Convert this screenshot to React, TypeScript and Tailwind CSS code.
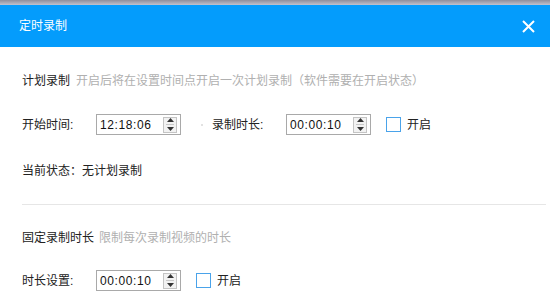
import React from 'react';

const font = { fontFamily: '"Liberation Sans", "Noto Sans CJK SC", sans-serif' };

function TimeBox({ value }: { value: string }) {
  return (
    <div className="flex h-[21px] w-[85px] items-center justify-between border border-[#a9a9a9] bg-white pl-[3px] pr-[3px]">
      <span className="text-[12px] tracking-[0.6px] text-[#111]">{value}</span>
      {/* 上下微调按钮 */}
      <div className="flex h-[16px] w-[14px] flex-col items-center justify-center gap-[2px] border border-[#c4c4c4] bg-[#f2f2f2]">
        <svg width="7" height="4" viewBox="0 0 7 4">
          <path d="M3.5 0 L7 4 L0 4 Z" fill="#333" />
        </svg>
        <div className="h-px w-[8px] bg-[#c8c8c8]" />
        <svg width="7" height="4" viewBox="0 0 7 4">
          <path d="M0 0 L7 0 L3.5 4 Z" fill="#333" />
        </svg>
      </div>
    </div>
  );
}

function CheckOpen() {
  return (
    <div className="flex items-center gap-[6px]">
      <div className="h-[15px] w-[15px] border border-[#4aa3ea] bg-white" />
      <span className="text-[12px] text-[#222]">开启</span>
    </div>
  );
}

export default function App() {
  return (
    <div className="h-[305px] w-[550px] overflow-hidden bg-white" style={font}>
      <div className="h-[5px] bg-gradient-to-b from-[#8e8e9c] to-[#c2c2ce]" />
      {/* 标题栏 */}
      <div className="flex h-[42px] items-center justify-between bg-[#049cfc] pl-[19px] pr-[15px]">
        <span className="text-[12px] text-white">定时录制</span>
        <svg width="13" height="13" viewBox="0 0 13 13">
          <path d="M1 1 L12 12 M12 1 L1 12" stroke="#fff" strokeWidth="2" />
        </svg>
      </div>

      <div className="px-[22px] pr-[4px]">
        {/* 计划录制 */}
        <div className="mt-[25px] flex h-[17px] items-center gap-[6px] text-[12px]">
          <span className="text-[#222]">计划录制</span>
          <span className="text-[#b0b0b0]">开启后将在设置时间点开启一次计划录制（软件需要在开启状态）</span>
        </div>
        <div className="mt-[25px] flex h-[21px] items-center text-[12px] text-[#222]">
          <span className="w-[74px]">开始时间:</span>
          <TimeBox value="12:18:06" />
          <div className="ml-[20px] h-[2px] w-[2px] bg-[#e2e2e2]" />
          <span className="ml-[9px] w-[74px]">录制时长:</span>
          <TimeBox value="00:00:10" />
          <div className="ml-[15px]">
            <CheckOpen />
          </div>
        </div>
        <div className="mt-[27px] flex h-[17px] items-center text-[12px] text-[#222]">当前状态：无计划录制</div>
        <div className="mt-[25px] h-px bg-[#e6e6e6]" />

        {/* 固定录制时长 */}
        <div className="mt-[24px] flex h-[17px] items-center gap-[5px] text-[12px]">
          <span className="text-[#222]">固定录制时长</span>
          <span className="text-[#b0b0b0]">限制每次录制视频的时长</span>
        </div>
        <div className="mt-[24px] flex h-[21px] items-center text-[12px] text-[#222]">
          <span className="w-[74px]">时长设置:</span>
          <TimeBox value="00:00:10" />
          <div className="ml-[15px]">
            <CheckOpen />
          </div>
        </div>
      </div>
    </div>
  );
}
